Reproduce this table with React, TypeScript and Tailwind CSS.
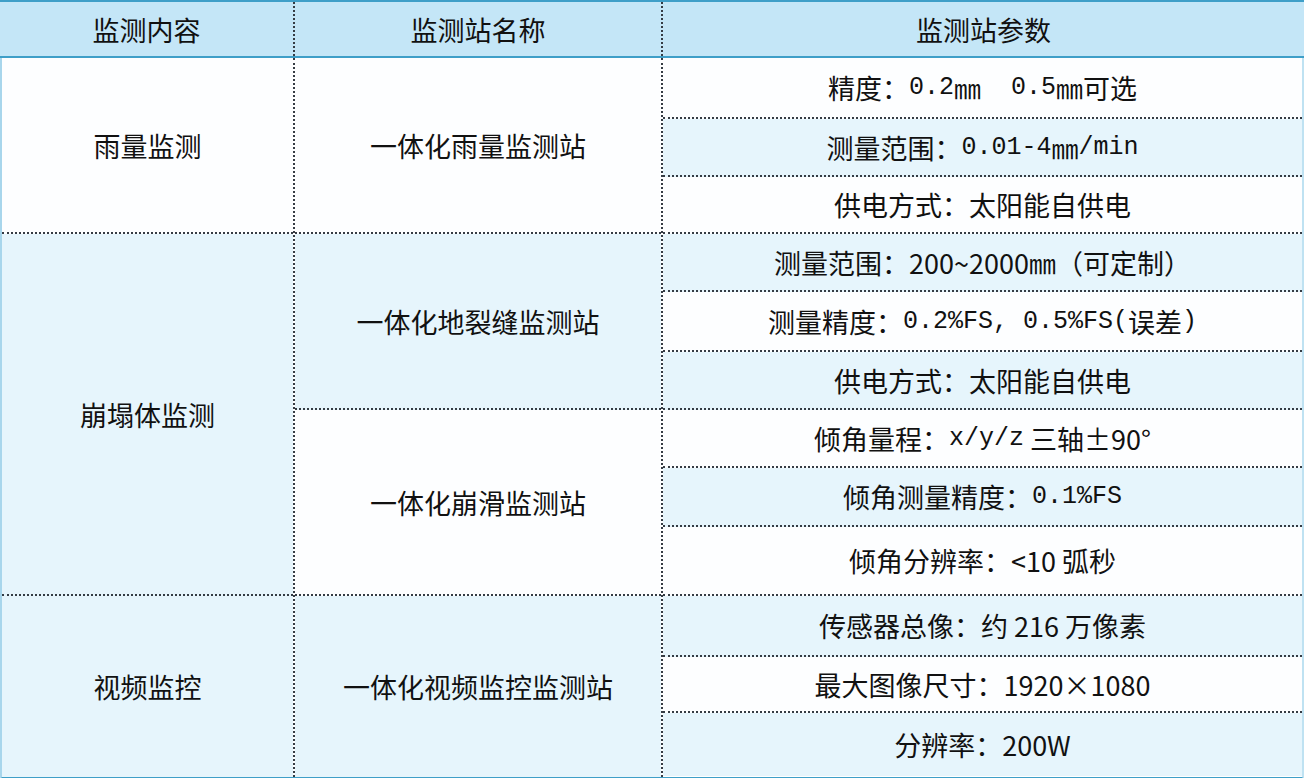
import React from 'react';

// ─── Data ─────────────────────────────────────────────────────────────────────

const BLUE = 'bg-[#e6f5fc]';
const WHITE = 'bg-[#fdfeff]';

const mono = (t: string) => (
  <span className="text-[25px]" style={{ fontFamily: '"Liberation Mono", monospace' }}>{t}</span>
);

const col1 = [
  { text: '雨量监测', h: 'h-[176px]', bg: WHITE },
  { text: '崩塌体监测', h: 'h-[362px]', bg: BLUE },
  { text: '视频监控', h: 'h-[181px]', bg: BLUE, last: true },
];

const col2 = [
  { text: '一体化雨量监测站', h: 'h-[176px]', bg: WHITE },
  { text: '一体化地裂缝监测站', h: 'h-[176px]', bg: BLUE },
  { text: '一体化崩滑监测站', h: 'h-[186px]', bg: WHITE },
  { text: '一体化视频监控监测站', h: 'h-[181px]', bg: BLUE, last: true },
];

const col3: { content: React.ReactNode; h: string }[] = [
  { content: <>精度：{mono('0.2')}㎜{mono('  0.5')}㎜可选</>, h: 'h-[61px]' },
  { content: <>测量范围：{mono('0.01-4')}㎜{mono('/min')}</>, h: 'h-[58px]' },
  { content: <>供电方式：太阳能自供电</>, h: 'h-[57px]' },
  { content: <>测量范围：200~2000㎜（可定制）</>, h: 'h-[58px]' },
  { content: <>测量精度：{mono('0.2%FS, 0.5%FS(')}误差{mono(')')}</>, h: 'h-[60px]' },
  { content: <>供电方式：太阳能自供电</>, h: 'h-[58px]' },
  { content: <>倾角量程：{mono('x/y/z')} 三轴±90°</>, h: 'h-[58px]' },
  { content: <>倾角测量精度：{mono('0.1%FS')}</>, h: 'h-[59px]' },
  { content: <>倾角分辨率：&lt;10 弧秒</>, h: 'h-[69px]' },
  { content: <>传感器总像：约 216 万像素</>, h: 'h-[61px]' },
  { content: <>最大图像尺寸：1920×1080</>, h: 'h-[56px]' },
  { content: <>分辨率：200W</>, h: 'h-[63px]' },
];

// ─── Main ─────────────────────────────────────────────────────────────────────

const App: React.FC = () => {
  return (
    <div
      className="w-[1304px] h-[778px] bg-white text-[#111] text-[27px] leading-none overflow-hidden"
      style={{ fontFamily: '"Noto Sans CJK SC", "Noto Sans", sans-serif' }}
    >
      {/* Header */}
      <div className="flex h-[58px] bg-[#c4e6f7] border-t-2 border-b-2 border-[#3f9fc8]">
        <div className="w-[295px] flex items-center justify-center border-r-2 border-dotted border-r-[#353c44]">监测内容</div>
        <div className="w-[368px] flex items-center justify-center border-r-2 border-dotted border-r-[#353c44]">监测站名称</div>
        <div className="flex-1 flex items-center justify-center">监测站参数</div>
      </div>

      {/* Body */}
      <div className="flex border-b-2 border-b-[#3f9fc8] border-l-2 border-l-[#a8d6ec] border-r-2 border-r-[#bfe2f2]">
        <div className="w-[293px] flex flex-col border-r-2 border-dotted border-r-[#353c44]">
          {col1.map(c => (
            <div
              key={c.text}
              className={`${c.h} ${c.bg} flex items-center justify-center ${c.last ? '' : 'border-b-2 border-dotted border-b-[#353c44]'}`}
            >
              {c.text}
            </div>
          ))}
        </div>
        <div className="w-[368px] flex flex-col border-r-2 border-dotted border-r-[#353c44]">
          {col2.map(c => (
            <div
              key={c.text}
              className={`${c.h} ${c.bg} flex items-center justify-center ${c.last ? '' : 'border-b-2 border-dotted border-b-[#353c44]'}`}
            >
              {c.text}
            </div>
          ))}
        </div>
        <div className="flex-1 flex flex-col">
          {col3.map((c, i) => (
            <div
              key={i}
              className={`${c.h} ${i % 2 === 0 ? WHITE : BLUE} flex items-center justify-center whitespace-pre ${i === col3.length - 1 ? '' : 'border-b-2 border-dotted border-b-[#353c44]'}`}
            >
              {c.content}
            </div>
          ))}
        </div>
      </div>
    </div>
  );
};

export default App;
